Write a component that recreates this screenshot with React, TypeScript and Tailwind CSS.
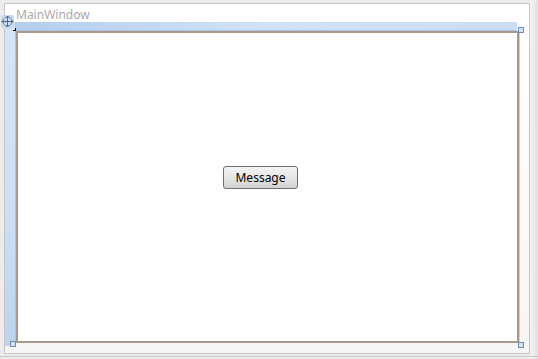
const handle = 'absolute w-[6px] h-[6px] border border-[#6f8db0] bg-[#d8e2ec]'

export default function App() {
  return (
    <div className="relative w-[538px] h-[359px] overflow-hidden bg-[#ececec] pl-[4px] pt-[3px] font-['Noto_Sans',sans-serif]">
      {/* shadow strips */}
      <div className="absolute right-0 top-0 h-full w-[8px] bg-gradient-to-r from-[#f3f3f3] to-[#e2e2e2]" />
      <div className="absolute left-0 bottom-[2px] h-px w-full bg-[#c9c9c9]" />

      <div className="relative flex w-[526px] h-[351px] border border-[#c6c6c6] bg-gradient-to-b from-white to-[#f6f6f6]">
        {/* left adorner bar */}
        <div className="flex flex-col w-[11px]">
          <div className="h-[18px]" />
          <div className="h-[324px] border-r border-[#a9c5e8] bg-gradient-to-b from-[#d5e4f6] via-[#d0e1f5] to-[#bcd4f0]" />
        </div>

        <div className="flex flex-col">
          <div className="h-[18px] pt-[3px] text-[12px] leading-[15px] text-[#a9a9a9]">MainWindow</div>
          <div className="w-[501px] h-[9px] border-b border-[#a9c5e8] bg-gradient-to-r from-[#b4cdee] via-[#d2e2f6] to-[#cbdcf3]" />

          <div className="flex w-[503px] h-[312px] border-2 border-[#a8998b] bg-white shadow-[1px_0_0_#bcd3ec] pl-[205px] pt-[133px]">
            <button className="w-[75px] h-[23px] rounded-[3px] border border-[#707070] bg-gradient-to-b from-[#f3f3f3] via-[#e6e6e6] to-[#d2d2d2] text-[12px] leading-[16px] text-black">
              Message
            </button>
          </div>
        </div>

        {/* overlay marks */}
        <div className="absolute left-[8px] top-[24px] w-[3px] h-[3px] border-r border-b border-black" />
        <div className={`${handle} left-[513px] top-[23px]`} />
        <div className={`${handle} left-[5px] top-[337px]`} />
        <div className={`${handle} left-[513px] top-[338px]`} />

        <div className="absolute left-[-4px] top-[11px] w-[13px] h-[13px] rounded-[2px] bg-[#c9d9ee]">
          <svg width="13" height="13" viewBox="0 0 13 13" fill="none">
            <circle cx="6.5" cy="6.5" r="4.5" stroke="#6f8db0" strokeWidth="1" />
            <path d="M6.5 1v11M1 6.5h11" stroke="#4f6d90" strokeWidth="1" />
            <path d="M5 2.5L6.5 1L8 2.5M5 10.5L6.5 12L8 10.5M2.5 5L1 6.5L2.5 8M10.5 5L12 6.5L10.5 8" stroke="#4f6d90" strokeWidth="1" />
          </svg>
        </div>
      </div>
    </div>
  )
}
